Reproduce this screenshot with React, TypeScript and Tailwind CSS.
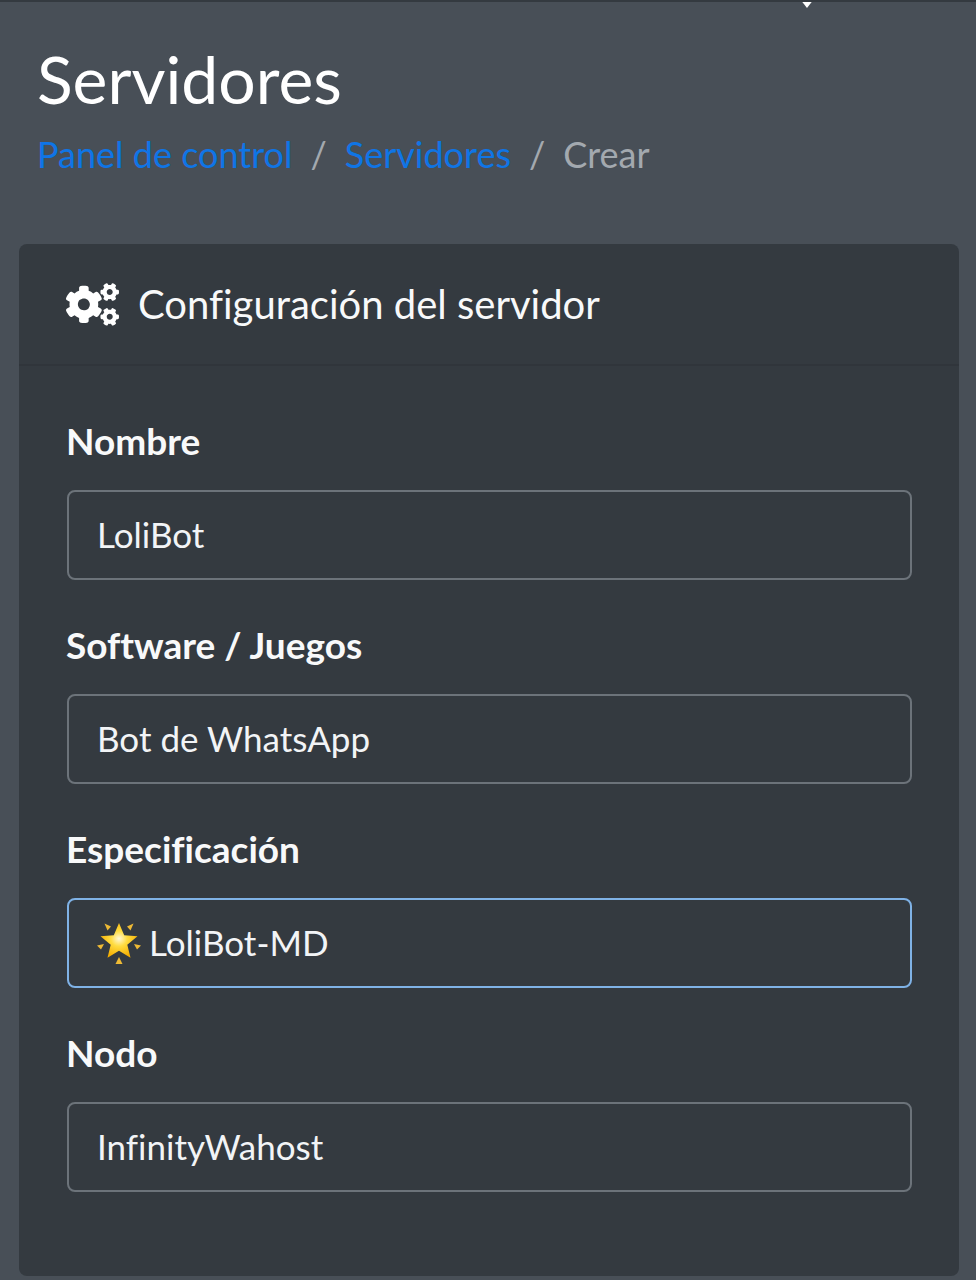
import { FaCogs } from "react-icons/fa"

function GlowingStar() {
  return (
    <svg width="44" height="44" viewBox="0 0 44 44" className="shrink-0">
      <defs>
        <radialGradient id="star" cx="50%" cy="45%" r="55%">
          <stop offset="0%" stopColor="#fff8d8" />
          <stop offset="40%" stopColor="#ffdc40" />
          <stop offset="100%" stopColor="#f4ad00" />
        </radialGradient>
      </defs>
      <path
        d="M22 3l5.200 12.300 13.300 1-10.200 8.500 3.200 13L22 30.800l-11.500 7 3.200-13L3.500 16.300l13.300-1z"
        fill="url(#star)"
      />
      <g fill="#eeba35">
        <path d="M7.500 3.500l6.500 3-3.500 4z" />
        <path d="M36.500 3.500l-6.500 3 3.500 4z" />
        <path d="M0 25.500l7-1.500-3 5.500z" />
        <path d="M44 25.500l-7-1.500 3 5.500z" />
        <path d="M22 37l3.500 7h-7z" />
      </g>
    </svg>
  )
}

function Field({ label, value, focused, icon }: { label: string; value: string; focused?: boolean; icon?: boolean }) {
  return (
    <div className="mb-[39px]">
      <label className="block text-[37px] leading-[52px] font-bold text-[#f8f9fa] mb-[23px] -translate-x-[1px]">{label}</label>
      <div
        className={`flex items-center gap-[8px] h-[90px] rounded-[8px] border-2 pl-[28px] pr-[29px] pb-[2px] text-[35px] text-[#f2f4f6] ${
          focused ? "border-[#7fb2e6]" : "border-[#6c737a]"
        }`}
      >
        {icon && <GlowingStar />}
        {value}
      </div>
    </div>
  )
}

export default function App() {
  return (
    <div className="h-[1280px] overflow-hidden bg-[#484f57] font-['Lato','Noto_Sans',sans-serif] [font-variant-ligatures:none] border-t-2 border-[#343a40] relative">
      <div className="absolute left-[800px] -top-[3px] w-[14px] h-[9px] bg-white [clip-path:polygon(0_0,100%_0,50%_100%)]" />
      <div className="pl-[19px] pr-[17px]">
        <div className="px-[19px] pt-[33px] h-[242px]">
          <h1 className="text-[66px] leading-[88px] text-white -translate-x-[1px]">Servidores</h1>
          <nav className="flex items-center text-[36px] leading-[44px] mt-[9px] -translate-x-[1px]">
            <a className="text-[#0f75e6]">Panel de control</a>
            <span className="px-[18px] text-[#a3a9af]">/</span>
            <a className="text-[#0f75e6]">Servidores</a>
            <span className="px-[18px] text-[#a3a9af]">/</span>
            <span className="text-[#a3a9af]">Crear</span>
          </nav>
        </div>
        <div className="h-[1032px] rounded-[8px] bg-[#343a40]">
          <div className="flex items-center h-[122px] px-[47px] gap-[19px] border-b-2 border-[#30353b] text-[40px] text-[#f8f9fa]">
            <FaCogs className="w-[53px] h-[43px] text-white" />
            <span>Configuración del servidor</span>
          </div>
          <div className="pl-[48px] pr-[47px] pt-[49px]">
            <Field label="Nombre" value="LoliBot" />
            <Field label="Software / Juegos" value="Bot de WhatsApp" />
            <Field label="Especificación" value="LoliBot-MD" focused icon />
            <Field label="Nodo" value="InfinityWahost" />
          </div>
        </div>
      </div>
    </div>
  )
}
